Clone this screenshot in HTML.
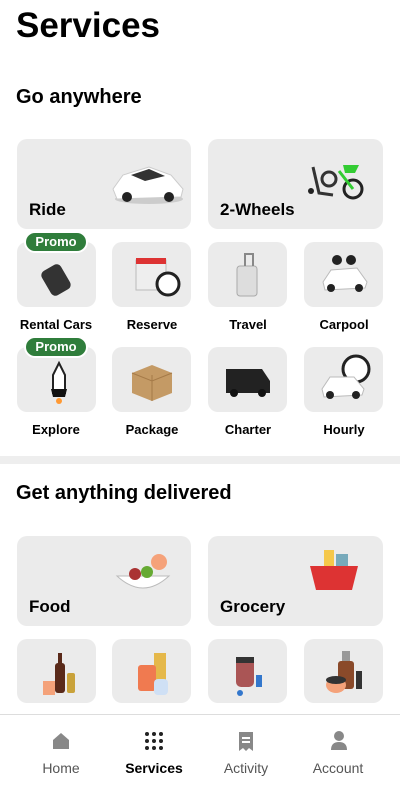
<!DOCTYPE html>
<html><head><meta charset="utf-8"><style>
*{margin:0;padding:0;box-sizing:border-box}
body{width:400px;height:785px;overflow:hidden;background:#fff;font-family:"Liberation Sans",sans-serif;color:#000;position:relative}
.a{position:absolute}
.t{background:#ebebeb;border-radius:10px;position:absolute}
.big{font-size:17px;font-weight:bold;position:absolute;left:12px;bottom:9px}
.lb{position:absolute;font-size:13px;font-weight:bold;width:96px;text-align:center}
.promo{position:absolute;background:#2f7d3b;color:#fff;font-weight:bold;font-size:13px;border:2px solid #fff;border-radius:12px;width:64px;height:22px;line-height:18px;text-align:center}
.nl{position:absolute;top:760px;font-size:14px;color:#555;width:100px;text-align:center}
</style></head><body>
<div class="a" style="left:16px;top:6px;font-size:35px;font-weight:bold">Services</div>
<div class="a" style="left:16px;top:86px;font-size:20px;font-weight:bold">Go anywhere</div>

<div class="t" style="left:17px;top:139px;width:174px;height:90px"><div class="big">Ride</div>
<svg class="a" style="left:92px;top:20px" width="80" height="48"><ellipse cx="40" cy="40" rx="34" ry="5" fill="#ccc"/><path d="M4 30 L14 16 L40 8 L62 16 L74 30 L72 38 L8 40Z" fill="#fff" stroke="#ccc"/><path d="M22 16 L40 10 L56 17 L36 22Z" fill="#333"/><circle cx="18" cy="38" r="5" fill="#222"/><circle cx="60" cy="38" r="5" fill="#222"/></svg></div>
<div class="t" style="left:208px;top:139px;width:175px;height:90px"><div class="big">2-Wheels</div>
<svg class="a" style="left:95px;top:18px" width="70" height="44"><circle cx="50" cy="32" r="9" fill="none" stroke="#222" stroke-width="3"/><path d="M40 8 L56 8 L52 16 L42 16Z" fill="#3c3"/><path d="M36 14 L50 32" stroke="#3c3" stroke-width="3"/><circle cx="26" cy="22" r="7" fill="none" stroke="#333" stroke-width="3"/><path d="M10 10 L16 36 L30 38" stroke="#333" stroke-width="3" fill="none"/><circle cx="8" cy="34" r="3" fill="#222"/></svg></div>

<div class="t" style="left:17px;top:242px;width:79px;height:65px"><svg class="a" style="left:20px;top:18px" width="40" height="38"><rect x="8" y="6" width="22" height="28" rx="5" transform="rotate(-30 19 20)" fill="#333"/></svg></div>
<div class="promo" style="left:24px;top:231px">Promo</div>
<div class="t" style="left:112px;top:242px;width:79px;height:65px"><svg class="a" style="left:20px;top:12px" width="50" height="46"><rect x="4" y="6" width="30" height="30" fill="#eee" stroke="#bbb"/><rect x="4" y="4" width="30" height="6" fill="#d33"/><circle cx="36" cy="30" r="11" fill="#fff" stroke="#222" stroke-width="3"/></svg></div>
<div class="t" style="left:208px;top:242px;width:79px;height:65px"><svg class="a" style="left:25px;top:8px" width="30" height="50"><rect x="4" y="16" width="20" height="30" rx="3" fill="#ddd" stroke="#aaa"/><path d="M12 16 V4 H20 V16" fill="none" stroke="#888" stroke-width="2"/></svg></div>
<div class="t" style="left:304px;top:242px;width:79px;height:65px"><svg class="a" style="left:15px;top:10px" width="50" height="45"><circle cx="18" cy="8" r="5" fill="#222"/><circle cx="32" cy="8" r="5" fill="#222"/><path d="M4 30 L12 18 L38 16 L48 30 L46 36 L6 38Z" fill="#fff" stroke="#bbb"/><circle cx="12" cy="36" r="4" fill="#222"/><circle cx="40" cy="36" r="4" fill="#222"/></svg></div>
<div class="lb" style="left:8px;top:317px">Rental Cars</div>
<div class="lb" style="left:104px;top:317px">Reserve</div>
<div class="lb" style="left:200px;top:317px">Travel</div>
<div class="lb" style="left:296px;top:317px">Carpool</div>

<div class="t" style="left:17px;top:347px;width:79px;height:65px"><svg class="a" style="left:28px;top:12px" width="26" height="46"><path d="M14 4 L20 16 L20 34 L8 34 L8 16Z" fill="#fff" stroke="#222" stroke-width="2"/><path d="M6 30 L22 30 L20 38 L8 38Z" fill="#111"/><circle cx="14" cy="42" r="3" fill="#f93"/></svg></div>
<div class="promo" style="left:24px;top:336px">Promo</div>
<div class="t" style="left:112px;top:347px;width:79px;height:65px"><svg class="a" style="left:16px;top:12px" width="48" height="44"><path d="M4 14 L24 6 L44 14 L44 34 L24 42 L4 34Z" fill="#c49a65"/><path d="M24 16 V42 M4 14 L24 22 L44 14" stroke="#a57a48" fill="none"/></svg></div>
<div class="t" style="left:208px;top:347px;width:79px;height:65px"><svg class="a" style="left:16px;top:16px" width="48" height="36"><path d="M2 6 L38 6 L46 18 L46 30 L2 30Z" fill="#222"/><circle cx="10" cy="30" r="4" fill="#111"/><circle cx="38" cy="30" r="4" fill="#111"/></svg></div>
<div class="t" style="left:304px;top:347px;width:79px;height:65px"><svg class="a" style="left:14px;top:6px" width="56" height="50"><circle cx="38" cy="16" r="13" fill="#fff" stroke="#222" stroke-width="3"/><path d="M4 36 L12 24 L36 24 L46 36 L44 42 L6 44Z" fill="#fff" stroke="#bbb"/><circle cx="12" cy="42" r="4" fill="#222"/><circle cx="38" cy="42" r="4" fill="#222"/></svg></div>
<div class="lb" style="left:8px;top:422px">Explore</div>
<div class="lb" style="left:104px;top:422px">Package</div>
<div class="lb" style="left:200px;top:422px">Charter</div>
<div class="lb" style="left:296px;top:422px">Hourly</div>

<div class="a" style="left:0;top:456px;width:400px;height:8px;background:#eee"></div>
<div class="a" style="left:16px;top:482px;font-size:20px;font-weight:bold">Get anything delivered</div>

<div class="t" style="left:17px;top:536px;width:174px;height:90px"><div class="big">Food</div>
<svg class="a" style="left:96px;top:12px" width="60" height="52"><circle cx="46" cy="14" r="8" fill="#f5a27a"/><path d="M4 28 Q30 52 56 28Z" fill="#fff" stroke="#bbb"/><circle cx="22" cy="26" r="6" fill="#a33"/><circle cx="34" cy="24" r="6" fill="#6a3"/></svg></div>
<div class="t" style="left:208px;top:536px;width:175px;height:90px"><div class="big">Grocery</div>
<svg class="a" style="left:98px;top:10px" width="56" height="50"><rect x="18" y="4" width="10" height="16" fill="#f5c84b"/><rect x="30" y="8" width="12" height="14" fill="#7ab"/><path d="M4 20 L52 20 L46 44 L10 44Z" fill="#d33"/></svg></div>

<div class="t" style="left:17px;top:639px;width:79px;height:64px"><svg class="a" style="left:20px;top:8px" width="44" height="52"><rect x="18" y="16" width="10" height="30" rx="3" fill="#5a2a1a"/><rect x="21" y="6" width="4" height="12" fill="#5a2a1a"/><rect x="30" y="26" width="8" height="20" rx="2" fill="#c9a23a"/><rect x="6" y="34" width="12" height="14" fill="#f4a27a"/></svg></div>
<div class="t" style="left:112px;top:639px;width:79px;height:64px"><svg class="a" style="left:18px;top:8px" width="46" height="52"><rect x="24" y="6" width="12" height="30" fill="#e5b84a"/><rect x="8" y="18" width="18" height="26" rx="3" fill="#f07a50"/><rect x="24" y="32" width="14" height="16" rx="4" fill="#cfe0f5"/></svg></div>
<div class="t" style="left:208px;top:639px;width:79px;height:64px"><svg class="a" style="left:20px;top:8px" width="46" height="52"><rect x="8" y="10" width="18" height="30" rx="5" fill="#a55"/><rect x="8" y="10" width="18" height="6" fill="#333"/><rect x="28" y="28" width="6" height="12" fill="#37c"/><circle cx="12" cy="46" r="3" fill="#37c"/></svg></div>
<div class="t" style="left:304px;top:639px;width:79px;height:64px"><svg class="a" style="left:18px;top:6px" width="46" height="54"><rect x="20" y="6" width="8" height="10" fill="#999"/><rect x="16" y="16" width="16" height="28" rx="3" fill="#8a4a2a"/><ellipse cx="14" cy="40" rx="10" ry="8" fill="#f4a27a"/><ellipse cx="14" cy="35" rx="10" ry="4" fill="#333"/><rect x="34" y="26" width="6" height="18" fill="#333"/></svg></div>

<div class="a" style="left:0;top:714px;width:400px;height:1px;background:#ddd"></div>
<svg class="a" style="left:51px;top:731px" width="20" height="20"><path d="M2 9 L10 2 L18 9 V18 H2Z" fill="#888"/></svg>
<svg class="a" style="left:144px;top:731px" width="20" height="20"><g fill="#222"><circle cx="3" cy="3" r="2"/><circle cx="10" cy="3" r="2"/><circle cx="17" cy="3" r="2"/><circle cx="3" cy="10" r="2"/><circle cx="10" cy="10" r="2"/><circle cx="17" cy="10" r="2"/><circle cx="3" cy="17" r="2"/><circle cx="10" cy="17" r="2"/><circle cx="17" cy="17" r="2"/></g></svg>
<svg class="a" style="left:237px;top:731px" width="20" height="22"><path d="M2 1 H16 V20 L12 17 L9 20 L6 17 L2 20Z" fill="#888"/><rect x="5" y="6" width="8" height="2" fill="#fff"/><rect x="5" y="10" width="8" height="2" fill="#fff"/></svg>
<svg class="a" style="left:329px;top:730px" width="20" height="22"><circle cx="10" cy="6" r="5" fill="#888"/><path d="M2 20 Q2 12 10 12 Q18 12 18 20Z" fill="#888"/></svg>
<div class="nl" style="left:11px">Home</div>
<div class="nl" style="left:104px;color:#000;font-weight:bold">Services</div>
<div class="nl" style="left:196px">Activity</div>
<div class="nl" style="left:288px">Account</div>
</body></html>
